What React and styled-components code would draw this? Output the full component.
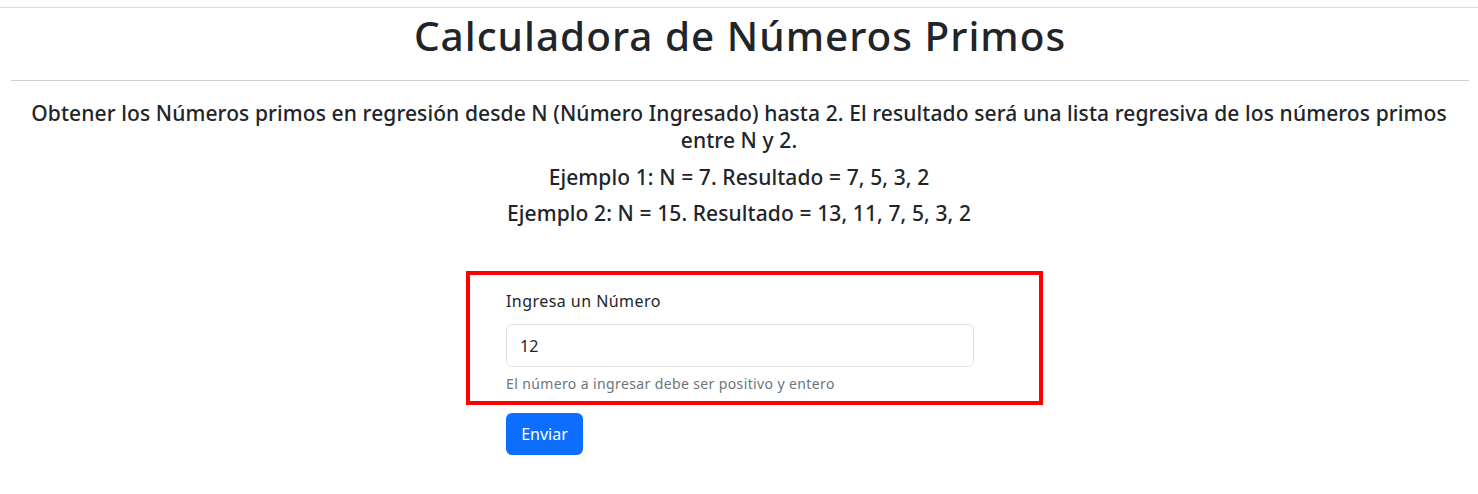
import React from 'react';
import styled, { createGlobalStyle } from 'styled-components';

const GlobalStyle = createGlobalStyle`
    body {
        margin: 0;
        background: #fff;
        color: #212529;
        font-family: "Noto Sans", "Open Sans", sans-serif;
    }
`;

const Page = styled.div`
    padding-top: 7px;
    display: flex;
    flex-direction: column;
`;

const TopRule = styled.div`
    height: 1px;
    background-color: #dcdcdc;
`;

const Header = styled.header`
    margin: 0 9px 0 11px;
    padding-top: 4px;
    border-bottom: 1px solid #cfcfcf;
    height: 68px;
    display: flex;
    align-items: flex-start;
    justify-content: center;
`;

const Title = styled.h1`
    margin: 0;
    font-size: 40.5px;
    font-weight: 550;
    line-height: 48px;
    letter-spacing: 1px;
`;

const Intro = styled.section`
    padding: 19px 20px 0;
    text-align: center;
    font-size: 21px;
    font-weight: 550;
    letter-spacing: 0.1px;
`;

const Text = styled.p`
    margin: 0 0 ${(p) => p.gap || 9}px;
    line-height: 27px;
`;

const FormBox = styled.form`
    align-self: center;
    width: 577px;
    margin: 35px 0 0 31px;
    display: flex;
    flex-direction: column;
    align-items: flex-start;
`;

const Fieldset = styled.div`
    align-self: stretch;
    border: 4px solid #ff0000;
    padding: 14px 0 7px 36px;
    display: flex;
    flex-direction: column;
`;

const Label = styled.label`
    font-size: 16px;
    line-height: 24px;
    margin-bottom: 11px;
    letter-spacing: 0.45px;
`;

const Input = styled.input`
    width: 468px;
    height: 43px;
    box-sizing: border-box;
    border: 1px solid #dee2e6;
    border-radius: 6px;
    padding: 0 13px;
    font-family: "Noto Sans", sans-serif;
    font-size: 16px;
    color: #212529;
    outline: none;
`;

const Help = styled.div`
    margin-top: 6px;
    font-size: 14px;
    line-height: 21px;
    color: #6c757d;
    letter-spacing: 0.38px;
`;

const Button = styled.button`
    margin: 8px 0 0 40px;
    width: 77px;
    height: 42px;
    border: none;
    border-radius: 6px;
    background-color: #0d6efd;
    color: #fff;
    font-family: "Noto Sans", sans-serif;
    font-size: 16px;
    cursor: pointer;
`;

export default function App() {
    return (
        <Page>
            <GlobalStyle />
            <TopRule />
            <Header>
                <Title>Calculadora de Números Primos</Title>
            </Header>
            <Intro>
                <Text gap={10}>
                    Obtener los Números primos en regresión desde N (Número Ingresado) hasta 2. El resultado será una lista regresiva de los números primos entre N y 2.
                </Text>
                <Text>Ejemplo 1: N = 7. Resultado = 7, 5, 3, 2</Text>
                <Text>Ejemplo 2: N = 15. Resultado = 13, 11, 7, 5, 3, 2</Text>
            </Intro>
            <FormBox onSubmit={(e) => e.preventDefault()}>
                <Fieldset>
                    <Label htmlFor="numero">Ingresa un Número</Label>
                    <Input id="numero" type="text" defaultValue="12" />
                    <Help>El número a ingresar debe ser positivo y entero</Help>
                </Fieldset>
                <Button type="submit">Enviar</Button>
            </FormBox>
        </Page>
    );
}
